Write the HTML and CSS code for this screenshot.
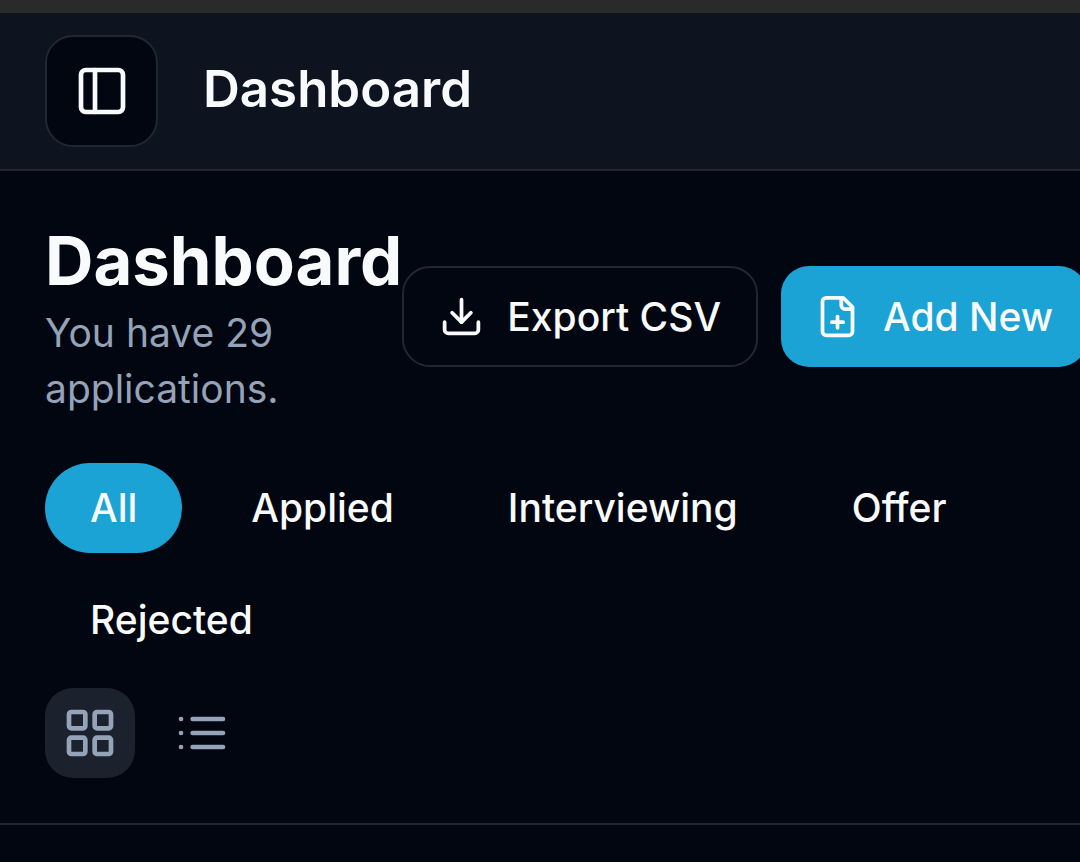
FILE: index.html
```html
<!DOCTYPE html>
<html lang="en">
<head>
<meta charset="utf-8">
<meta name="viewport" content="width=device-width, initial-scale=1">
<title>Dashboard</title>
<link rel="stylesheet" href="styles.css">
</head>
<body>
<div class="status-strip"></div>
<header class="topbar">
  <button class="sidebar-toggle" type="button" aria-label="Toggle sidebar">
    <svg class="icon icon-lg" viewBox="0 0 24 24" aria-hidden="true"><rect x="3" y="3" width="18" height="18" rx="2"/><path d="M9 3v18"/></svg>
  </button>
  <div class="topbar-title">Dashboard</div>
</header>
<main>
  <section class="overview">
    <div class="heading-row">
      <div class="heading">
        <h1>Dashboard</h1>
        <p>You have 29 applications.</p>
      </div>
      <div class="actions">
        <button class="button button-outline" type="button">
          <svg class="icon" viewBox="0 0 24 24" aria-hidden="true"><path d="M21 15v4a2 2 0 0 1-2 2H5a2 2 0 0 1-2-2v-4"/><path d="m7 10 5 5 5-5"/><path d="M12 15V3"/></svg>
          Export CSV
        </button>
        <button class="button button-primary" type="button">
          <svg class="icon" viewBox="0 0 24 24" aria-hidden="true"><path d="M15 2H6a2 2 0 0 0-2 2v16a2 2 0 0 0 2 2h12a2 2 0 0 0 2-2V7Z"/><path d="M14 2v4a2 2 0 0 0 2 2h4"/><path d="M9 15h6"/><path d="M12 18v-6"/></svg>
          Add New
        </button>
      </div>
    </div>
    <div class="controls">
      <nav class="filters" aria-label="Application status">
        <button class="pill pill-active" type="button">All</button>
        <button class="pill" type="button">Applied</button>
        <button class="pill" type="button">Interviewing</button>
        <button class="pill" type="button">Offer</button>
        <button class="pill" type="button">Rejected</button>
      </nav>
      <div class="views">
        <button class="view view-active" type="button" aria-label="Grid view">
          <svg class="icon icon-lg" viewBox="0 0 24 24" aria-hidden="true"><rect x="3" y="3" width="7" height="7" rx="1"/><rect x="14" y="3" width="7" height="7" rx="1"/><rect x="14" y="14" width="7" height="7" rx="1"/><rect x="3" y="14" width="7" height="7" rx="1"/></svg>
        </button>
        <button class="view" type="button" aria-label="List view">
          <svg class="icon icon-lg" viewBox="0 0 24 24" aria-hidden="true"><path d="M8 6h13M8 12h13M8 18h13M3 6h.01M3 12h.01M3 18h.01"/></svg>
        </button>
      </div>
    </div>
  </section>
</main>
</body>
</html>
```
FILE: styles.css
```css
:root {
  --background: #020610;
  --card: #0e141f;
  --border: #1f2733;
  --foreground: #f8fafc;
  --muted: #94a3b8;
  --primary: #1ca3d6;
}

* {
  box-sizing: border-box;
}

body {
  margin: 0;
  min-height: 100vh;
  overflow-x: hidden;
  background: var(--background);
  color: var(--foreground);
  font-family: Inter, "Liberation Sans", sans-serif;
  font-size: 39px;
  line-height: 56px;
}

button {
  display: inline-flex;
  align-items: center;
  justify-content: center;
  margin: 0;
  padding: 0;
  border: 0;
  background: transparent;
  color: inherit;
  font: inherit;
  font-weight: 500;
  white-space: nowrap;
}

.icon {
  width: 45px;
  height: 45px;
  flex: none;
  fill: none;
  stroke: currentColor;
  stroke-width: 2;
  stroke-linecap: round;
  stroke-linejoin: round;
}

.icon-lg {
  width: 56px;
  height: 56px;
}

.status-strip {
  height: 13px;
  background: #2a2a2a;
}

.topbar {
  display: flex;
  align-items: center;
  gap: 45px;
  padding: 22px 45px;
  border-bottom: 2px solid var(--border);
  background: var(--card);
}

.sidebar-toggle {
  width: 113px;
  height: 112px;
  border: 2px solid var(--border);
  border-radius: 28px;
  background: var(--background);
}

.topbar-title {
  padding-bottom: 4px;
  font-size: 51px;
  font-weight: 600;
}

.overview {
  display: grid;
  gap: 46px;
  padding: 45px;
  border-bottom: 2px solid var(--border);
}

.heading-row {
  display: flex;
  align-items: center;
  justify-content: space-between;
}

h1 {
  margin: 0;
  font-size: 67px;
  font-weight: 700;
  line-height: 89px;
}

.heading p {
  margin: 0;
  color: var(--muted);
}

.actions {
  display: flex;
  flex: none;
  gap: 23px;
}

.button {
  gap: 23px;
  height: 101px;
  padding: 0 34px;
  border-radius: 28px;
}

.button-outline {
  padding: 0 35px;
  border: 2px solid var(--border);
}

.button-primary {
  background: var(--primary);
}

.controls {
  display: grid;
  gap: 23px;
}

.filters {
  display: flex;
  flex-wrap: wrap;
  gap: 22px 24px;
}

.pill {
  height: 90px;
  padding: 0 45px;
  border-radius: 45px;
}

.pill-active {
  background: var(--primary);
}

.views {
  display: flex;
  gap: 22px;
}

.view {
  width: 90px;
  height: 90px;
  border-radius: 28px;
  color: var(--muted);
}

.view-active {
  background: #1b222e;
}
```
